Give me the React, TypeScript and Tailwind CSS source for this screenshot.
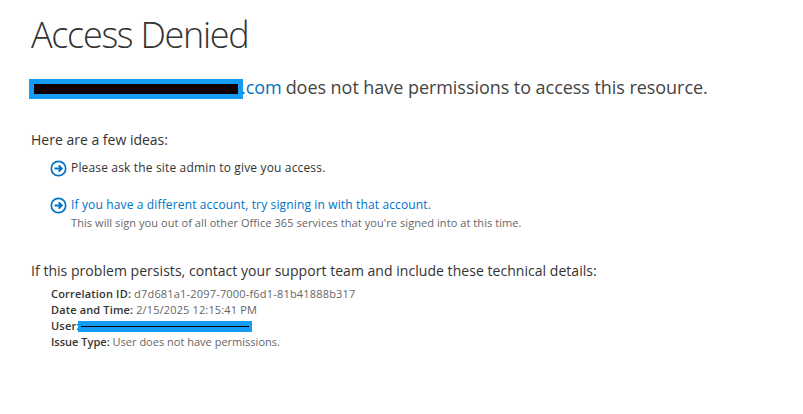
function ArrowIcon() {
  return (
    <svg width="17" height="17" viewBox="0 0 17 17" fill="none" className="shrink-0">
      <circle cx="8.5" cy="8.5" r="7.2" stroke="#0072c6" strokeWidth="1.7" />
      <path d="M4.5 8.5H11.5M8.6 5.3L11.8 8.5L8.6 11.7" stroke="#0072c6" strokeWidth="1.9" />
    </svg>
  );
}

export default function App() {
  return (
    <div className="w-[803px] h-[414px] bg-white overflow-hidden pl-[31px] text-[#333333] font-['Open_Sans',sans-serif]">
      <h1 className="pt-[13px] h-[57px] text-[36px] leading-[44px] font-light tracking-[-1.3px] text-[#333333]">Access Denied</h1>
      <div className="mt-[21px] h-[22px] flex items-center text-[18px] leading-[22px] tracking-[-0.05px] text-[#444444]">
        <div className="-ml-[2px] w-[214px] h-[20px] bg-[#159cf5] flex items-center justify-center shrink-0">
          <div className="w-[204px] h-[10px] bg-[#100000]" />
        </div>
        <span className="-ml-[2px] pb-[4px] text-[#0072c6]">.com</span>
        <span className="ml-[4px] pb-[4px]">does not have permissions to access this resource.</span>
      </div>
      <p className="mt-[30px] text-[14px] leading-[20px] tracking-[0px] text-[#333333]">Here are a few ideas:</p>
      <div className="mt-[8px] ml-[19px] flex items-center gap-[4px] h-[20px] text-[12px] tracking-[0.16px] text-[#333333]">
        <ArrowIcon />
        <span>Please ask the site admin to give you access.</span>
      </div>
      <div className="mt-[17px] ml-[19px] flex items-center gap-[4px] h-[20px] text-[12px] tracking-[0.14px] text-[#0072c6]">
        <ArrowIcon />
        <span>If you have a different account, try signing in with that account.</span>
      </div>
      <p className="ml-[40px] text-[11px] leading-[16px] tracking-[0.07px] text-[#666666]">This will sign you out of all other Office 365 services that you're signed into at this time.</p>
      <p className="mt-[30px] text-[14px] leading-[20px] tracking-[0.04px] text-[#333333]">If this problem persists, contact your support team and include these technical details:</p>
      <div className="mt-[5px] ml-[20px] text-[11px] leading-[16px] tracking-[0.18px] text-[#666666]">
        <div><b className="font-semibold text-[#333333]">Correlation ID:</b> d7d681a1-2097-7000-f6d1-81b41888b317</div>
        <div className="tracking-[0.14px]"><b className="font-semibold text-[#333333]">Date and Time:</b> 2/15/2025 12:15:41 PM</div>
        <div className="flex items-center h-[16px]">
          <b className="font-semibold text-[#333333] -mr-[2px]">User:</b>
          <div className="w-[174px] h-[11px] bg-[#159cf5] flex items-center justify-center">
            <div className="w-[168px] h-px bg-black" />
          </div>
        </div>
        <div className="tracking-[0.01px]"><b className="font-semibold text-[#333333]">Issue Type:</b> User does not have permissions.</div>
      </div>
    </div>
  );
}
